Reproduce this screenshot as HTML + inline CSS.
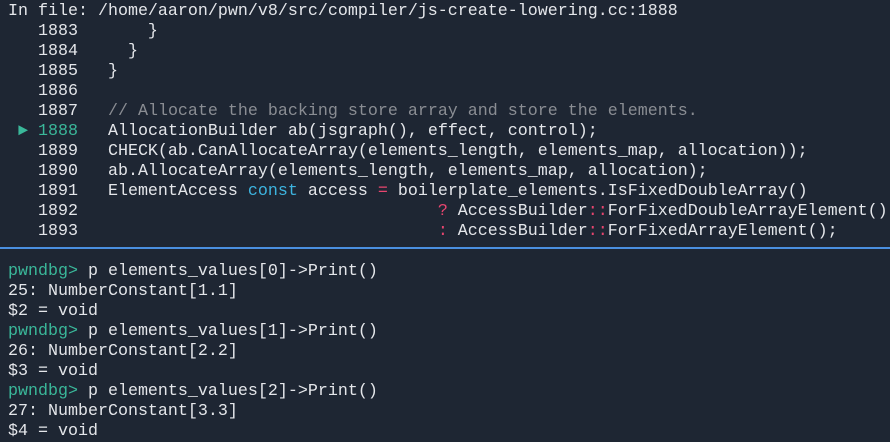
<!DOCTYPE html>
<html><head><style>
html,body{margin:0;padding:0;background:#1e2633;width:890px;height:439px;overflow:hidden}
pre{margin:0;position:absolute;left:8px;font-family:"Liberation Mono",monospace;font-size:16.67px;line-height:20px;color:#e4e6ea}
.c{color:#8a8d93}.p{color:#e8456f}.k{color:#3db4e0}.g{color:#3ab89a}
.sep{position:absolute;left:0;top:247px;width:890px;height:2px;background:#4a8fe0}
</style></head><body>
<pre style="top:2px">In file: /home/aaron/pwn/v8/src/compiler/js-create-lowering.cc:1888
   1883       }
   1884     }
   1885   }
   1886
   1887   <span class="c">// Allocate the backing store array and store the elements.</span>
 <span class="g">► 1888</span>   AllocationBuilder ab(jsgraph(), effect, control);
   1889   CHECK(ab.CanAllocateArray(elements_length, elements_map, allocation));
   1890   ab.AllocateArray(elements_length, elements_map, allocation);
   1891   ElementAccess <span class="k">const</span> access <span class="p">=</span> boilerplate_elements.IsFixedDoubleArray()
   1892                                    <span class="p">?</span> AccessBuilder<span class="p">::</span>ForFixedDoubleArrayElement()
   1893                                    <span class="p">:</span> AccessBuilder<span class="p">::</span>ForFixedArrayElement();</pre>
<div class="sep"></div>
<pre style="top:262px"><span class="g">pwndbg&gt;</span> p elements_values[0]-&gt;Print()
25: NumberConstant[1.1]
$2 = void
<span class="g">pwndbg&gt;</span> p elements_values[1]-&gt;Print()
26: NumberConstant[2.2]
$3 = void
<span class="g">pwndbg&gt;</span> p elements_values[2]-&gt;Print()
27: NumberConstant[3.3]
$4 = void</pre>
</body></html>
